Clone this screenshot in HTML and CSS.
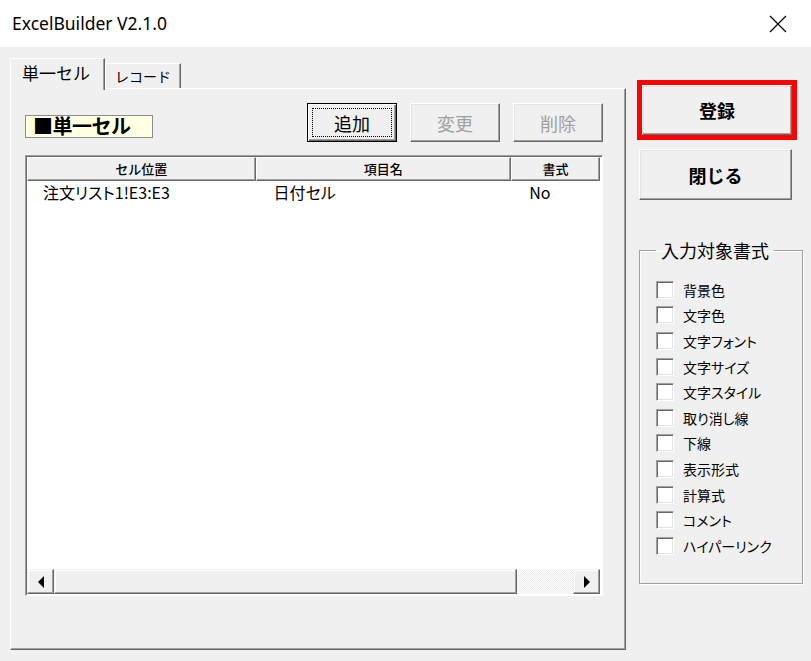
FILE: index.html
```html
<!DOCTYPE html>
<html lang="ja">
<head>
    <meta charset="UTF-8">
    <meta name="viewport" content="width=device-width, initial-scale=1.0">
    <title>ExcelBuilder V2.1.0</title>
    <link rel="stylesheet" href="styles.css">
</head>
<body>
    <div class="titlebar">
        <span class="title">ExcelBuilder V2.1.0</span>
        <svg class="close" width="18" height="18" viewBox="0 0 18 18">
            <path d="M1 1 L17 17 M17 1 L1 17" stroke="#000" stroke-width="1.2" fill="none"/>
        </svg>
    </div>

    <div class="window-body">
        <div class="tabs-area">
            <div class="tabs">
                <div class="tab active">単一セル</div>
                <div class="tab">レコード</div>
            </div>
            <div class="panel">
                <div class="panel-top">
                    <div class="mode-label">■単一セル</div>
                    <div class="actions">
                        <button class="btn default">追加</button>
                        <button class="btn" disabled>変更</button>
                        <button class="btn" disabled>削除</button>
                    </div>
                </div>

                <div class="listview">
                    <div class="list-header">
                        <div class="col col-pos">セル位置</div>
                        <div class="col col-name">項目名</div>
                        <div class="col col-fmt">書式</div>
                    </div>
                    <div class="list-body">
                        <div class="row">
                            <div class="cell col-pos">注文リスト1!E3:E3</div>
                            <div class="cell col-name">日付セル</div>
                            <div class="cell col-fmt">No</div>
                        </div>
                    </div>
                    <div class="hscroll">
                        <div class="sb-btn"><span class="arrow-left"></span></div>
                        <div class="sb-thumb"></div>
                        <div class="sb-track"></div>
                        <div class="sb-btn"><span class="arrow-right"></span></div>
                    </div>
                </div>
            </div>
        </div>

        <div class="side">
            <div class="highlight">
                <button class="btn big">登録</button>
            </div>
            <button class="btn big close-btn">閉じる</button>

            <fieldset class="group">
                <legend>入力対象書式</legend>
                <ul class="checks">
                    <li><span class="box"></span>背景色</li>
                    <li><span class="box"></span>文字色</li>
                    <li><span class="box"></span>文字フォント</li>
                    <li><span class="box"></span>文字サイズ</li>
                    <li><span class="box"></span>文字スタイル</li>
                    <li><span class="box"></span>取り消し線</li>
                    <li><span class="box"></span>下線</li>
                    <li><span class="box"></span>表示形式</li>
                    <li><span class="box"></span>計算式</li>
                    <li><span class="box"></span>コメント</li>
                    <li><span class="box"></span>ハイパーリンク</li>
                </ul>
            </fieldset>
        </div>
    </div>
</body>
</html>
```

FILE: styles.css
```css
body {
    margin: 0;
    width: 811px;
    height: 661px;
    overflow: hidden;
    background-color: #f0f0f0;
    color: #000;
    font-family: "Noto Sans CJK JP", "Noto Sans", sans-serif;
}

.titlebar {
    height: 47px;
    background-color: #fff;
    display: flex;
    align-items: center;
    justify-content: space-between;
    padding: 0 24px 0 12px;
}

.title {
    font-family: "Noto Sans", "Open Sans", sans-serif;
    font-size: 17.5px;
    margin-top: -2px;
}

.close {
    display: block;
}

.window-body {
    display: flex;
    padding: 11px 0 0 10px;
}

/* tabs */
.tabs-area {
    width: 616px;
}

.tabs {
    display: flex;
    align-items: flex-end;
    height: 30px;
}

.tab {
    box-sizing: border-box;
    height: 25px;
    padding: 0 9px;
    font-size: 14px;
    line-height: 24px;
    border: 1px solid;
    border-color: #fff #696969 transparent #fff;
    border-bottom: none;
    box-shadow: inset -1px 0 #a0a0a0;
}

.tab.active {
    height: 32px;
    margin-bottom: -2px;
    padding: 0 14px 0 11px;
    font-size: 17px;
    line-height: 28px;
    background-color: #f0f0f0;
    position: relative;
    z-index: 1;
}

.panel {
    box-sizing: border-box;
    height: 562px;
    border: 1px solid;
    border-color: #fff #696969 #696969 #fff;
    box-shadow: inset -1px -1px #a0a0a0;
    padding: 14px 22px 0 14px;
}

.panel-top {
    display: flex;
    justify-content: space-between;
    height: 39px;
}

.mode-label {
    align-self: flex-end;
    margin-bottom: 4px;
    box-sizing: border-box;
    width: 128px;
    height: 23px;
    background-color: #ffffe1;
    border: 1px solid #8c8c8c;
    font-size: 20px;
    font-weight: bold;
    line-height: 20px;
    padding-left: 7px;
    letter-spacing: -0.5px;
}

.actions {
    display: flex;
    gap: 13px;
}

.btn {
    position: relative;
    box-sizing: border-box;
    width: 90px;
    height: 39px;
    background-color: #f0f0f0;
    border: 1px solid;
    border-color: #fff #696969 #696969 #fff;
    box-shadow: inset -1px -1px #a0a0a0, inset 1px 1px #e3e3e3;
    font-family: "Noto Sans CJK JP", sans-serif;
    font-size: 18px;
    color: #000;
    padding: 0;
}

.btn:disabled {
    color: #a0a0a0;
}

.btn.default {
    border-color: #000;
    box-shadow: inset 1px 1px #fff, inset -1px -1px #696969, inset -2px -2px #a0a0a0;
}

.btn.default::after {
    content: "";
    position: absolute;
    top: 4px;
    left: 4px;
    right: 4px;
    bottom: 4px;
    border: 1px dotted #000;
}

/* list view */
.listview {
    box-sizing: border-box;
    margin-top: 13px;
    width: 578px;
    height: 441px;
    border: 1px solid;
    border-color: #a0a0a0 #fff #fff #a0a0a0;
    box-shadow: inset 1px 1px #696969;
    background-color: #fff;
    display: flex;
    flex-direction: column;
    padding: 1px 2px 1px 1px;
}

.list-header {
    display: flex;
    height: 24px;
    background-color: #f0f0f0;
}

.list-header .col {
    box-sizing: border-box;
    border: 1px solid;
    border-color: #fff #696969 #696969 #fff;
    box-shadow: inset -1px -1px #a0a0a0;
    text-align: center;
    font-size: 13px;
    font-weight: 500;
    line-height: 21px;
}

.col-pos {
    width: 229px;
}

.col-name {
    width: 256px;
}

.col-fmt {
    width: 89px;
}

.list-body {
    flex: 1;
}

.row {
    display: flex;
    height: 24px;
    font-size: 16px;
    line-height: 22px;
    font-feature-settings: "palt";
}

.row .cell {
    box-sizing: border-box;
    padding-left: 18px;
    white-space: nowrap;
}

.row .col-pos {
    padding-left: 16px;
}

.hscroll {
    display: flex;
    height: 25px;
    background-color: #f0f0f0;
}

.sb-btn,
.sb-thumb {
    box-sizing: border-box;
    border: 1px solid;
    border-color: #f0f0f0 #696969 #696969 #f0f0f0;
    box-shadow: inset -1px -1px #a0a0a0, inset 1px 1px #fff;
    background-color: #f0f0f0;
}

.sb-btn {
    width: 27px;
    display: flex;
    align-items: center;
    justify-content: center;
}

.sb-thumb {
    flex: 1;
}

.sb-track {
    width: 56px;
    background-color: #f4f4f4;
    background-image: repeating-conic-gradient(#fff 0 25%, #ebebeb 0 50%);
    background-size: 2px 2px;
}

.arrow-left {
    width: 0;
    height: 0;
    border-top: 6px solid transparent;
    border-bottom: 6px solid transparent;
    border-right: 6px solid #000;
}

.arrow-right {
    width: 0;
    height: 0;
    border-top: 6px solid transparent;
    border-bottom: 6px solid transparent;
    border-left: 6px solid #000;
}

/* right side */
.side {
    display: flex;
    flex-direction: column;
    margin-left: 11px;
    padding-top: 22px;
    width: 167px;
}

.highlight {
    box-sizing: border-box;
    width: 160px;
    height: 60px;
    border: 5px solid #ff0000;
}

.btn.big {
    font-size: 18px;
    font-weight: bold;
}

.highlight .btn {
    width: 100%;
    height: 100%;
}

.close-btn {
    margin: 9px 0 0 2px;
    width: 153px;
    height: 51px;
}

.group {
    box-sizing: border-box;
    margin: 37px 0 0 2px;
    width: 164px;
    height: 347px;
    border: 1px solid #a0a0a0;
    box-shadow: inset 1px 1px #fff, 1px 1px #fff;
    padding: 0 0 0 16px;
}

.group legend {
    padding: 0 5px;
    font-size: 18px;
    line-height: 26px;
}

.checks {
    list-style-type: none;
    margin: 14px 0 0;
    padding: 0;
}

.checks li {
    display: flex;
    align-items: center;
    height: 25.6px;
    font-size: 14px;
    font-feature-settings: "palt";
}

.box {
    box-sizing: border-box;
    width: 18px;
    height: 18px;
    margin-right: 9px;
    background-color: #fff;
    border: 1px solid;
    border-color: #a0a0a0 #fff #fff #a0a0a0;
    box-shadow: inset 1px 1px #696969, inset -1px -1px #e3e3e3;
}
```
